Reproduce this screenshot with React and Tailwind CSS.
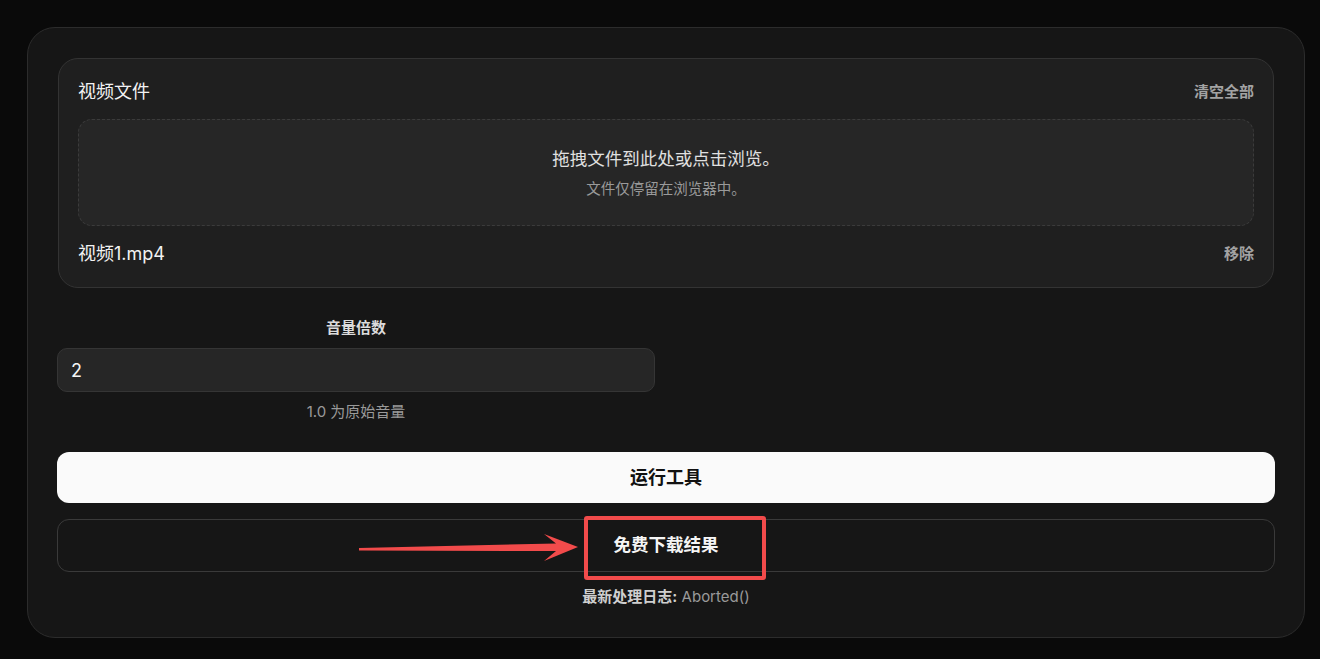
export default function App() {
  const font = { fontFamily: "Inter, 'Noto Sans CJK SC', sans-serif" };
  return (
    <div className="relative min-h-[659px] w-full bg-[#0a0a0a] pl-[27px] pr-[15px] pt-[27px]" style={font}>
      <div className="flex w-[1278px] flex-col rounded-[28px] border border-[#2c2c2c] bg-[#161616] px-[29px] pb-[30px] pt-[30px]">
        {/* file panel */}
        <div className="mx-[1px] flex flex-col rounded-[20px] border border-[#333333] bg-[#1f1f1f] px-[19px] pb-[20px] pt-[20px]">
          <div className="flex h-[26px] items-center justify-between">
            <span className="text-[18px] leading-[26px] text-[#f2f2f2]">视频文件</span>
            <button className="text-[15px] font-semibold leading-[20px] text-[#a3a3a3]">清空全部</button>
          </div>
          <div className="mt-[14px] flex h-[107px] flex-col items-center justify-center rounded-[14px] border border-dashed border-[#3b3b3b] bg-[#262626]">
            <span className="text-[17.5px] leading-[24px] text-[#e0e0e0]">拖拽文件到此处或点击浏览。</span>
            <span className="mt-[8px] text-[14.5px] leading-[20px] text-[#9a9a9a]">文件仅停留在浏览器中。</span>
          </div>
          <div className="mt-[15px] flex h-[26px] items-center justify-between">
            <span className="text-[18px] leading-[26px] text-[#f2f2f2]">视频1.mp4</span>
            <button className="text-[15px] font-semibold leading-[20px] text-[#a3a3a3]">移除</button>
          </div>
        </div>

        {/* volume field */}
        <div className="mt-[30px] flex w-[598px] flex-col items-center">
          <label className="text-[15px] font-bold leading-[20px] text-[#dcdcdc]">音量倍数</label>
          <div className="mt-[10px] flex h-[44px] w-full items-center rounded-[10px] border border-[#353535] bg-[#262626] px-[13px] text-[18px] text-[#f5f5f5]">
            2
          </div>
          <span className="mt-[10px] text-[15px] leading-[20px] text-[#9a9a9a]">1.0 为原始音量</span>
        </div>

        <button className="mt-[30px] flex h-[51px] items-center justify-center rounded-[12px] bg-[#fafafa] text-[18px] font-bold text-[#111111]">
          运行工具
        </button>
        <button className="mt-[16px] flex h-[53px] items-center justify-center rounded-[12px] border border-[#3a3a3a] bg-transparent text-[17.5px] font-bold text-[#f5f5f5]">
          免费下载结果
        </button>
        <div className="mt-[15px] text-center text-[15px] leading-[20px]">
          <span className="font-bold text-[#cfcfcf]">最新处理日志:</span>
          <span className="text-[#9a9a9a]"> Aborted()</span>
        </div>
      </div>

      {/* callout highlight */}
      <div className="pointer-events-none absolute left-[584px] top-[516px] h-[64px] w-[182px] rounded-[3px] border-[4px] border-[#f24b4b]" />
      <svg className="pointer-events-none absolute left-0 top-0" width="1320" height="659" viewBox="0 0 1320 659">
        <polygon
          points="359,548 359,550.5 556,551 544,561 578,547 544,534 556,543.5"
          fill="#f24b4b"
        />
      </svg>
    </div>
  );
}
